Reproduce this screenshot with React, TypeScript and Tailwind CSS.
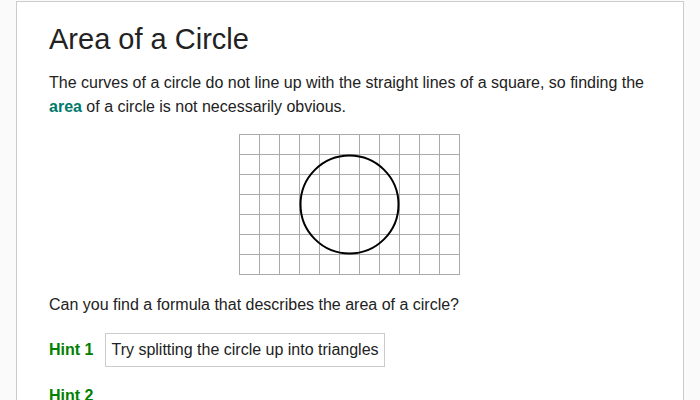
export default function App() {
  const cols = Array.from({ length: 12 }, (_, i) => i * 20 + 0.5)
  const rows = Array.from({ length: 8 }, (_, i) => i * 20 + 0.5)
  return (
    <div className="min-h-screen bg-[#fafafa] px-4 pt-px font-['Liberation_Sans',Arial,sans-serif] text-[#222]">
      <div className="border border-[#ccc] bg-white pl-[32px] pr-[33px] pt-[20px] pb-6 h-[420px]">
        <h1 className="text-[29px] leading-[34px]">Area of a Circle</h1>
        <p className="mt-[15px] text-[16px] leading-[24px]">
          The curves of a circle do not line up with the straight lines of a square, so finding the{' '}
          <b className="text-[#00796b]">area</b> of a circle is not necessarily obvious.
        </p>
        <div className="mt-[15px] flex justify-center">
          <svg width="221" height="141" viewBox="0 0 221 141">
            {cols.map((x) => (
              <line key={'c' + x} x1={x} y1={0} x2={x} y2={141} stroke="#aaa" strokeWidth={1} />
            ))}
            {rows.map((y) => (
              <line key={'r' + y} x1={0} y1={y} x2={221} y2={y} stroke="#aaa" strokeWidth={1} />
            ))}
            <circle cx={110.5} cy={70.5} r={49} fill="none" stroke="#000" strokeWidth={2} />
          </svg>
        </div>
        <p className="mt-[18px] text-[16px] leading-[24px]">
          Can you find a formula that describes the area of a circle?
        </p>
        <div className="mt-[16px] flex items-center gap-3">
          <span className="font-bold text-[#008000]">Hint 1</span>
          <span className="border border-[#ccc] px-[5px] py-[4px] leading-[24px]">
            Try splitting the circle up into triangles
          </span>
        </div>
        <div className="mt-[17px] font-bold text-[#008000] leading-[24px]">Hint 2</div>
      </div>
    </div>
  )
}
